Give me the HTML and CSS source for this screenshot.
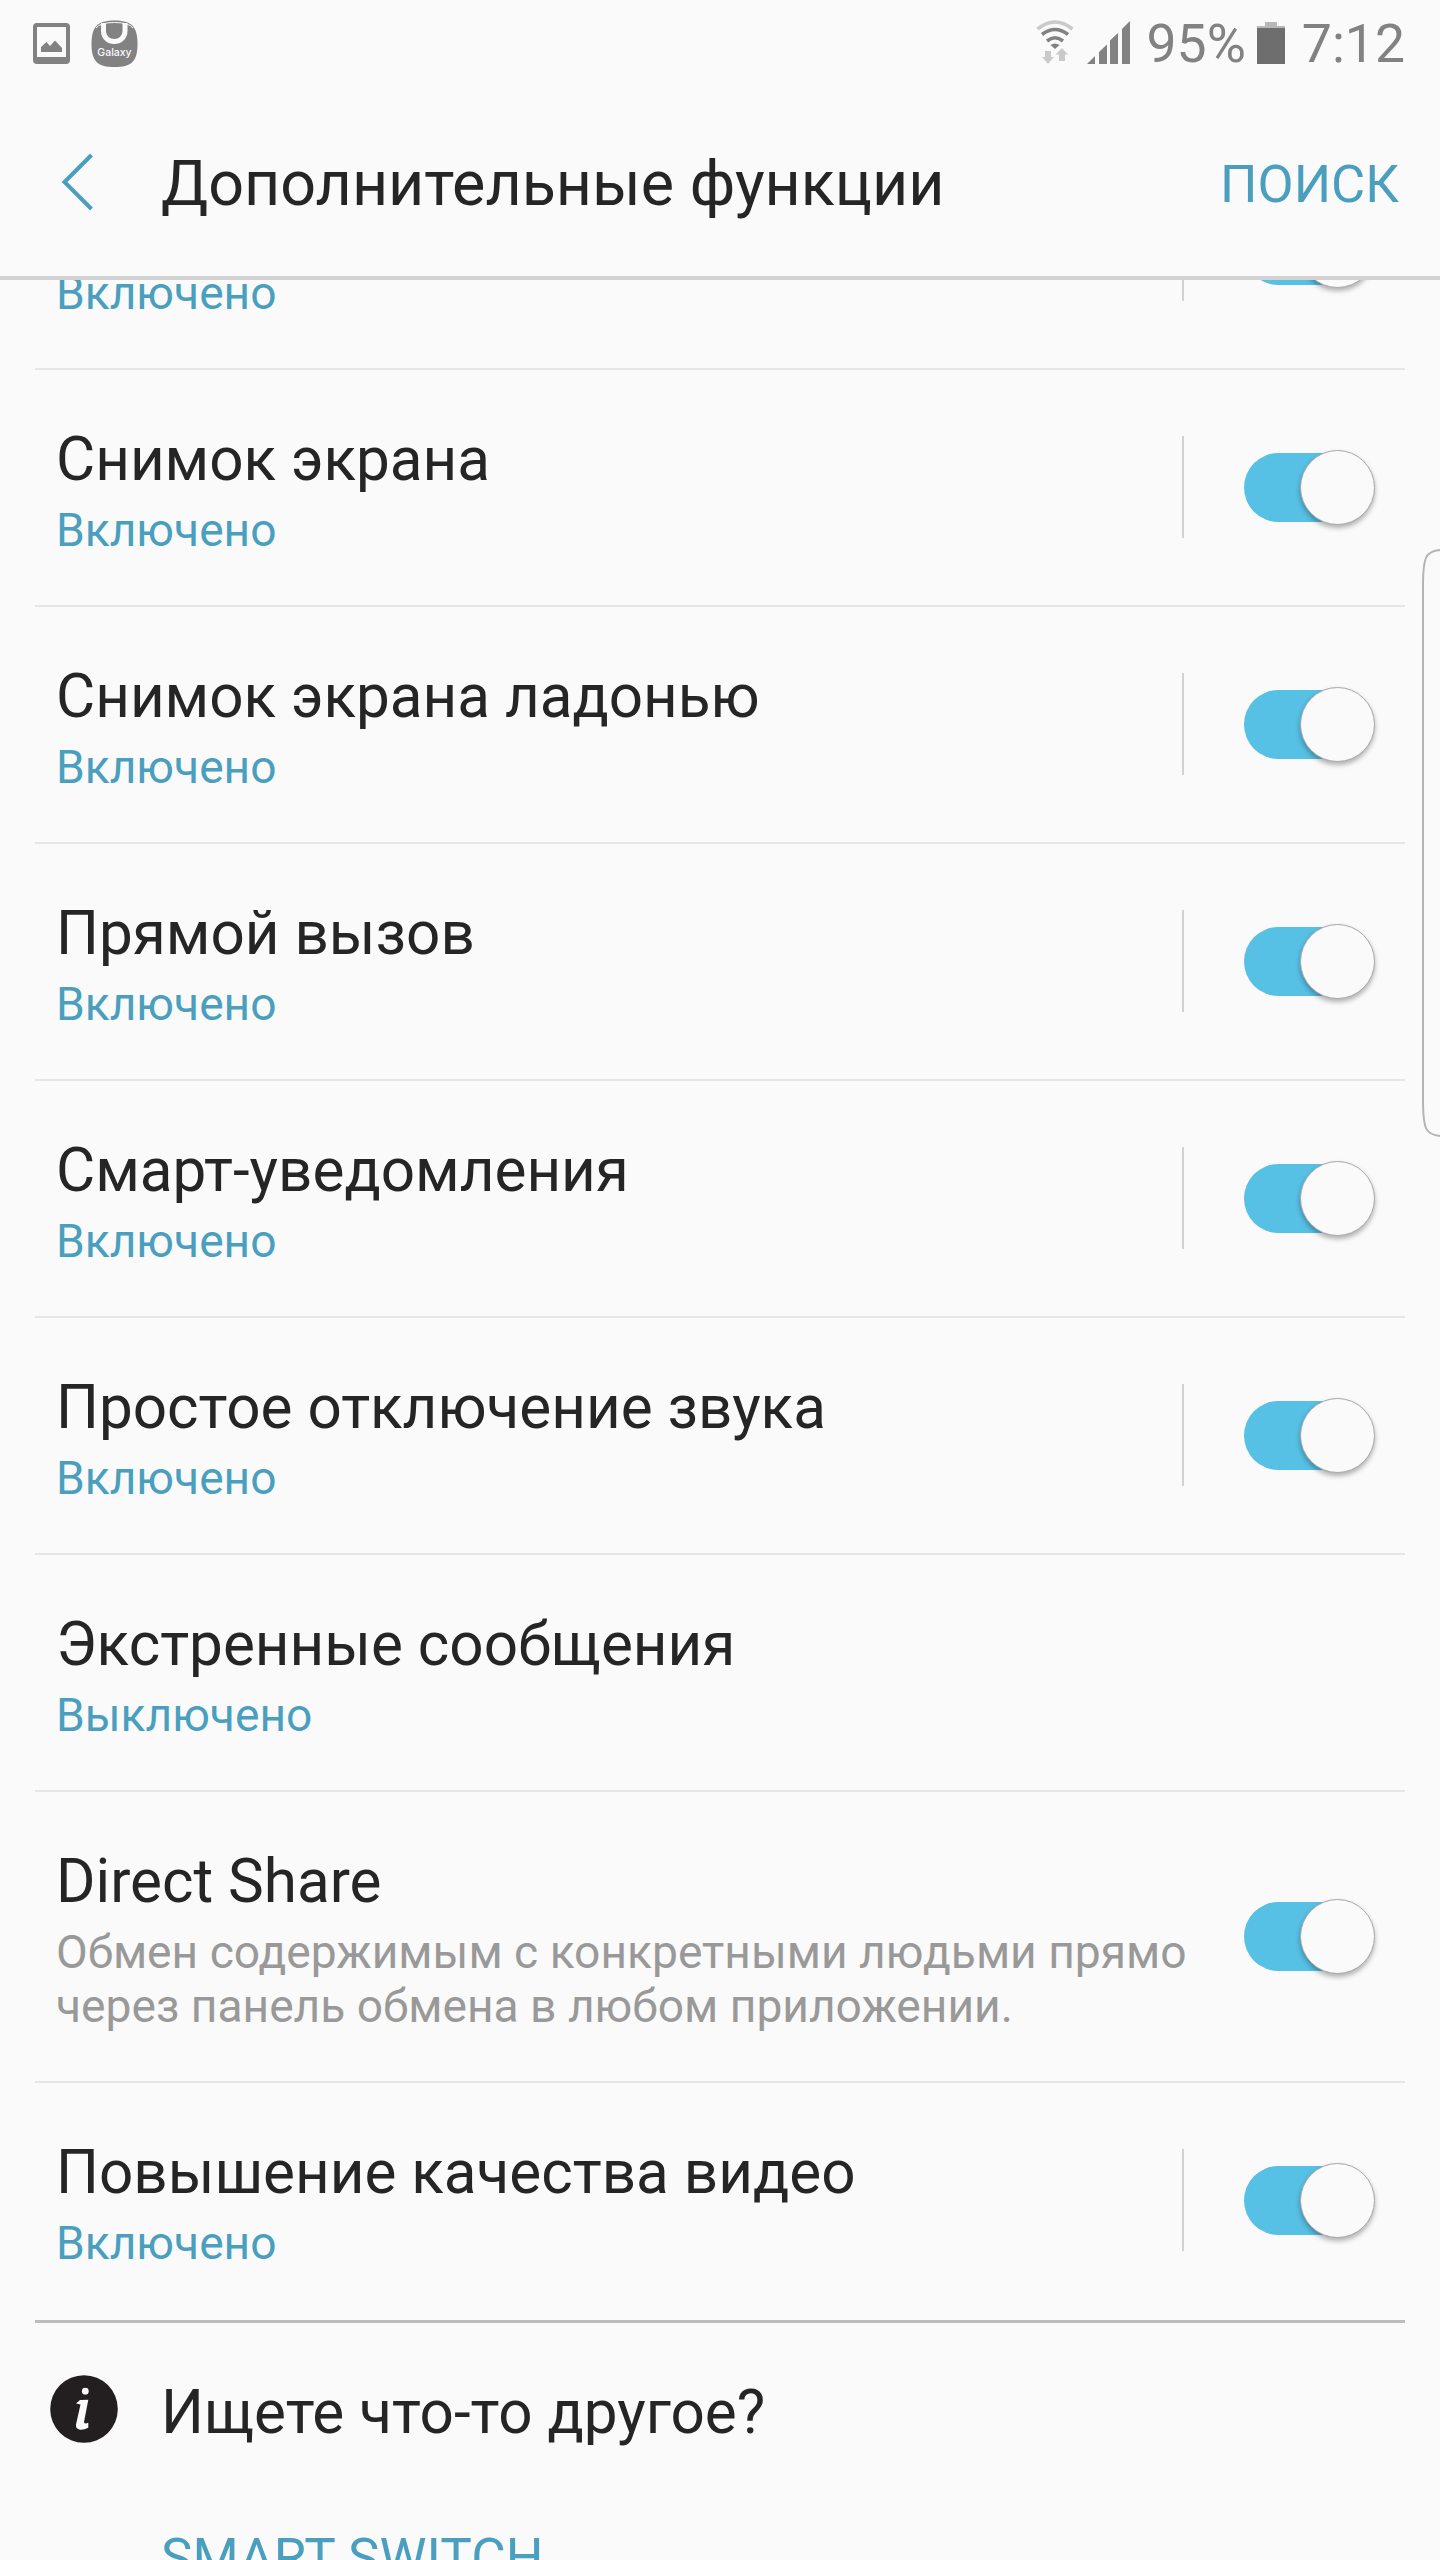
FILE: index.html
```html
<!DOCTYPE html>
<html lang="ru">
<head>
    <meta charset="UTF-8">
    <meta name="viewport" content="width=device-width, initial-scale=1.0">
    <title>Дополнительные функции</title>
    <link rel="stylesheet" href="styles.css">
</head>
<body>

<div class="status-bar">
    <div class="status-left">
        <svg class="icon-picture" width="37" height="41" viewBox="0 0 37 41">
            <path fill="#828282" fill-rule="evenodd" d="M4 0H33Q37 0 37 4V37Q37 41 33 41H4Q0 41 0 37V4Q0 0 4 0ZM4 4V34H33V4Z"/>
            <path fill="#828282" d="M8 29V24L13.5 19L17 23L22 17.500L29 25V29Z"/>
        </svg>
        <svg class="icon-galaxy" width="47" height="48" viewBox="0 0 47 48">
            <path fill="#828282" d="M23.500 .5C40 .5 46.500 6 46.500 24S40 47 23.500 47S.5 42 .5 24S7 .5 23.500 .5Z"/>
            <path fill="none" stroke="#fafafa" stroke-width="1" d="M5 8Q9 2.500 23.500 2.500T42 8"/>
            <path fill="none" stroke="#fafafa" stroke-width="5" d="M12.500 3V11C12.500 25 34 25 34 11V3"/>
            <text x="23.500" y="36" text-anchor="middle" class="galaxy-text">Galaxy</text>
        </svg>
    </div>
    <div class="status-right">
        <svg class="icon-wifi" width="38" height="44" viewBox="0 0 38 44">
            <g fill="none" stroke="#828282" stroke-width="3.600">
                <path stroke="#cacaca" d="M1.500 9Q19 -5 36.500 9"/>
                <path d="M6 14.500Q19 4.500 32 14.500"/>
                <path d="M11 21Q19 14.500 27 21"/>
            </g>
            <path fill="#828282" d="M14.500 25Q19 22 23.500 25L19 29Z"/>
            <path fill="#cacaca" d="M9 31H15V37H18L12 44L6 37H9ZM23 41V34.500H19.500L26 28L32 34.500H29V41Z"/>
        </svg>
        <svg class="icon-signal" width="43" height="43" viewBox="0 0 43 43">
            <path fill="#828282" d="M0 43L8 35V43ZM12 43V31L20 23.500V43ZM23 43V19.500L31 12V43ZM35 43V8L43 0V43Z"/>
        </svg>
        <span class="battery-text">95%</span>
        <svg class="icon-battery" width="28" height="42" viewBox="0 0 28 42">
            <path fill="#b8b8b8" d="M8 0H20V4H28V6H0V4H8Z"/>
            <path fill="#6e6e6e" d="M0 6H28V42H0Z"/>
        </svg>
        <span class="clock">7:12</span>
    </div>
</div>

<div class="header">
    <a href="#" class="back">
        <svg width="33" height="58" viewBox="0 0 33 58">
            <path fill="none" stroke="#4a9fbf" stroke-width="4" d="M30.500 2L3.500 29L30.500 56"/>
        </svg>
    </a>
    <h1>Дополнительные функции</h1>
    <a href="#" class="search">ПОИСК</a>
</div>

<div class="content">
    <ul class="settings">
        <li class="first">
            <div class="text">
                <p>Включено</p>
            </div>
            <div class="divider"></div>
            <div class="toggle"><span class="knob"></span></div>
        </li>
        <li>
            <div class="text">
                <h2>Снимок экрана</h2>
                <p>Включено</p>
            </div>
            <div class="divider"></div>
            <div class="toggle"><span class="knob"></span></div>
        </li>
        <li>
            <div class="text">
                <h2>Снимок экрана ладонью</h2>
                <p>Включено</p>
            </div>
            <div class="divider"></div>
            <div class="toggle"><span class="knob"></span></div>
        </li>
        <li>
            <div class="text">
                <h2>Прямой вызов</h2>
                <p>Включено</p>
            </div>
            <div class="divider"></div>
            <div class="toggle"><span class="knob"></span></div>
        </li>
        <li>
            <div class="text">
                <h2>Смарт-уведомления</h2>
                <p>Включено</p>
            </div>
            <div class="divider"></div>
            <div class="toggle"><span class="knob"></span></div>
        </li>
        <li>
            <div class="text">
                <h2>Простое отключение звука</h2>
                <p>Включено</p>
            </div>
            <div class="divider"></div>
            <div class="toggle"><span class="knob"></span></div>
        </li>
        <li>
            <div class="text">
                <h2>Экстренные сообщения</h2>
                <p>Выключено</p>
            </div>
        </li>
        <li>
            <div class="text">
                <h2>Direct Share</h2>
                <p class="description">Обмен содержимым с конкретными людьми прямо<br>через панель обмена в любом приложении.</p>
            </div>
            <div class="toggle"><span class="knob"></span></div>
        </li>
        <li>
            <div class="text">
                <h2>Повышение качества видео</h2>
                <p>Включено</p>
            </div>
            <div class="divider"></div>
            <div class="toggle"><span class="knob"></span></div>
        </li>
    </ul>

    <div class="more">
        <svg class="icon-info" width="68" height="68" viewBox="0 0 68 68">
            <circle cx="34" cy="34" r="33.800" fill="#231f20"/>
            <circle cx="35.300" cy="16.200" r="3.400" fill="#fafafa"/>
            <path fill="#fafafa" d="M26 28.500L30 25L38.300 24.700L34 47Q34 49.500 38.300 47.700V52.700Q34 55 30 54.700Q25.500 54 26 49.500L30.500 29.500Z"/>
        </svg>
        <div class="more-text">
            <h2>Ищете что-то другое?</h2>
            <a href="#">SMART SWITCH</a>
        </div>
    </div>
</div>

<!-- edge panel handle -->
<svg class="edge-handle" width="20" height="590" viewBox="0 0 20 590">
    <path fill="#fafafa" stroke="#b4b4b4" stroke-width="2" d="M21 2C6 3 3 8 3 38V552C3 582 6 587 21 588"/>
</svg>

</body>
</html>
```
FILE: styles.css
```css
* {
    box-sizing: border-box;
}
body {
    font-family: Roboto, 'Noto Sans', sans-serif;
    margin: 0;
    height: 2560px;
    background-color: #fafafa;
    color: #252525;
    display: flex;
    flex-direction: column;
    overflow: hidden;
    position: relative;
}
h1, h2, p, ul {
    margin: 0;
    padding: 0;
    font-weight: normal;
}
a {
    color: #4a9fbf;
    text-decoration: none;
}
svg {
    display: block;
    flex: none;
}
.status-bar {
    height: 88px;
    flex: none;
    display: flex;
    justify-content: space-between;
    padding: 0 35px 0 33px;
    color: #828282;
    font-size: 53.500px;
    line-height: 88px;
}
.status-left, .status-right {
    display: flex;
}
.icon-picture {
    margin-top: 23px;
}
.icon-galaxy {
    margin: 20px 0 0 21px;
}
.galaxy-text {
    font-family: Inter, sans-serif;
    font-size: 10.500px;
    font-weight: 500;
    fill: #fafafa;
}
.icon-wifi {
    margin-top: 20px;
}
.icon-signal {
    margin: 21px 17px 0 13px;
}
.icon-battery {
    margin: 22px 17px 0 11px;
}
.header {
    height: 192px;
    flex: none;
    display: flex;
    align-items: center;
    padding: 4px 41px 0 61px;
    border-bottom: 4px solid #d2d2d2;
}
.back {
    margin-bottom: 4px;
}
.header h1 {
    flex: 1;
    margin-left: 67px;
    font-size: 62.800px;
    line-height: 74px;
}
.search {
    font-size: 52.500px;
    line-height: 62px;
}
.content {
    flex: 1;
    min-height: 0;
    overflow: hidden;
}
.settings {
    list-style-type: none;
    margin: 0 35px;
    padding-bottom: 2px;
    border-bottom: 3px solid #bcbcbc;
}
.settings li {
    display: flex;
    align-items: center;
    padding: 0 30px 0 21px;
    border-bottom: 2px solid #e6e6e6;
}
.settings li:last-child {
    border-bottom: none;
}
.text {
    flex: 1;
    padding: 55px 0 48px;
    white-space: nowrap;
}
/* list is scrolled under the header */
.settings .first {
    margin-top: -147px;
}
.first .text {
    padding-top: 125px;
}
h2 {
    font-size: 60.200px;
    line-height: 70px;
}
.text p {
    margin-top: 8px;
    font-size: 46.150px;
    line-height: 54px;
    color: #4a9fbf;
}
.text .description {
    color: #999;
}
.divider {
    width: 2px;
    height: 102px;
    margin: 0 60px 1px 0;
    background-color: #d2d2d2;
}
.toggle {
    width: 131px;
    height: 69px;
    flex: none;
    display: flex;
    align-items: center;
    justify-content: flex-end;
    border-radius: 35px;
    background: linear-gradient(to right, #57c0e5 100px, transparent 100px);
}
.knob {
    width: 75px;
    height: 75px;
    flex: none;
    margin-bottom: 1px;
    border: 1px solid #a8a8a8;
    border-radius: 50%;
    background-color: #fafafa;
    box-shadow: 0 3px 5px rgba(0, 0, 0, 0.3);
}
.more {
    display: flex;
    padding: 52px 0 0 50px;
}
.more-text {
    margin: 3px 0 0 43px;
}
.more-text a {
    display: block;
    margin-top: 79px;
    font-size: 53px;
    line-height: 62px;
}
.edge-handle {
    position: absolute;
    top: 548px;
    right: 0;
}
```
